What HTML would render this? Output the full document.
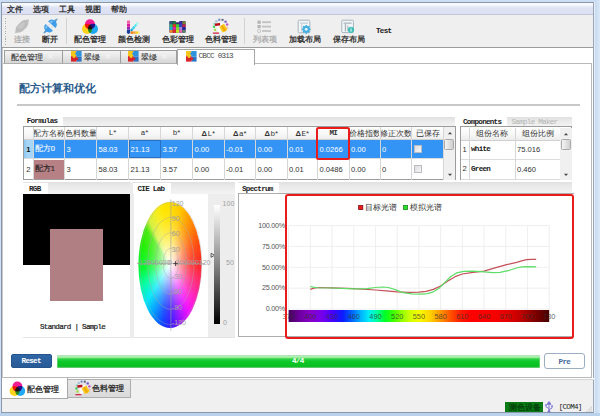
<!DOCTYPE html>
<html lang="zh">
<head>
<meta charset="utf-8">
<title>配方计算和优化</title>
<style>
html,body{margin:0;padding:0;}
body{width:600px;height:416px;overflow:hidden;background:#cfdff1;font-family:"Liberation Sans",sans-serif;}
#w{position:relative;width:600px;height:416px;overflow:hidden;background:#cfe0f4;}
#w div,#w span,#w svg{position:absolute;box-sizing:border-box;}
.c{font-family:"Liberation Sans",sans-serif;font-size:7.7px;line-height:9px;color:#1e1e22;white-space:nowrap;-webkit-text-stroke:0.25px currentColor;}
.m{font-family:"Liberation Mono",monospace;font-size:7.6px;line-height:9px;letter-spacing:-0.73px;color:#333;white-space:nowrap;}
.d{font-family:"Liberation Sans",sans-serif;font-size:7.6px;line-height:9px;color:#303030;white-space:nowrap;}
.g{color:#a8a8a8;}
.n{-webkit-text-stroke:0 transparent;color:#333;}
.w{color:#fff;}
.vl{width:1px;background:#dcdcdc;}
.hl{height:1px;background:#dcdcdc;}
</style>
</head>
<body>
<div id="w">

<!-- window frame -->
<div style="left:0;top:0;width:600px;height:3px;background:#cbdef3;"></div>
<div style="left:594.2px;top:2.2px;width:1.2px;height:411px;background:#e6edf6;"></div>
<div style="left:1px;top:2.2px;width:593.3px;height:411px;background:#fff;border:1px solid #8a96ab;border-left-width:1.2px;border-right:1.1px solid #9aa5b6;"></div>
<div style="left:595.2px;top:0;width:4.8px;height:416px;background:linear-gradient(90deg,#c6daf0,#dbe9f8);"></div>
<div style="left:0;top:0;width:1px;height:416px;background:#cfe0f4;"></div>
<div style="left:0;top:413.2px;width:600px;height:3px;background:#b9d1eb;"></div>
<div style="left:2.2px;top:48px;width:1px;height:352px;background:#c9c9c9;"></div>

<!-- menu bar -->
<div style="left:2.2px;top:3.2px;width:591px;height:11px;background:linear-gradient(180deg,#fcfdff 0%,#f2f4fb 22%,#dfe3f4 42%,#dbe0f2 100%);"></div>
<div style="left:2.2px;top:14px;width:591px;height:1px;background:#c4c7d6;"></div>
<span class="c" style="left:7px;top:4.5px;">文件</span>
<span class="c" style="left:33px;top:4.5px;">选项</span>
<span class="c" style="left:59px;top:4.5px;">工具</span>
<span class="c" style="left:85px;top:4.5px;">视图</span>
<span class="c" style="left:111px;top:4.5px;">帮助</span>

<!-- toolbar -->
<div style="left:2.2px;top:15px;width:591px;height:32px;background:#efefef;"></div>
<div style="left:2.2px;top:47px;width:591px;height:1px;background:#9c9c9c;"></div>
<div style="left:5px;top:18px;width:1px;height:27px;background:repeating-linear-gradient(180deg,#adadad 0,#adadad 1.1px,#efefef 1.1px,#efefef 2.56px);"></div>
<div style="left:66px;top:18px;width:1px;height:26px;background:#d2d2d2;"></div>
<div style="left:244px;top:18px;width:1px;height:26px;background:#d2d2d2;"></div>

<span class="c g" style="left:14px;top:35px;">连接</span>
<span class="c" style="left:42px;top:35px;">断开</span>
<span class="c" style="left:74px;top:35px;">配色管理</span>
<span class="c" style="left:118px;top:35px;">颜色检测</span>
<span class="c" style="left:161.5px;top:35px;">色彩管理</span>
<span class="c" style="left:205px;top:35px;">色料管理</span>
<span class="c g" style="left:252.5px;top:35px;">列表项</span>
<span class="c" style="left:288.5px;top:35px;">加载布局</span>
<span class="c" style="left:332.5px;top:35px;">保存布局</span>
<span class="m" style="left:376px;top:27px;font-weight:bold;color:#222;">Test</span>

<!-- TOOLBAR ICONS -->
<svg id="tbicons" style="left:0;top:15px;" width="400" height="33" viewBox="0 15 400 33">
<!-- connect (disabled) -->
<g transform="translate(22 26.3) rotate(-44)">
  <path d="M-10,0 C-7.5,-0.6 -6.5,-3.9 -2,-3.9 L2,-3.9 C6.5,-3.9 7.5,-0.6 10,0 C7.5,0.6 6.5,3.9 2,3.9 L-2,3.9 C-6.5,3.9 -7.5,0.6 -10,0 Z" fill="#bdbdbd"/>
  <ellipse cx="0" cy="-0.8" rx="4" ry="2" fill="#c8c8c8"/>
</g>
<!-- disconnect -->
<g transform="translate(50.5 26) rotate(-47)">
  <path d="M1.8,-5 A5,5 0 0 1 6.7,-1.1 L9.8,-0.5 L9.8,0.5 L6.7,1.1 A5,5 0 0 1 1.8,5 Z" fill="#3f9ce9"/>
  <path d="M-1.8,-5 A5,5 0 0 0 -6.7,-1.1 L-9.8,-0.5 L-9.8,0.5 L-6.7,1.1 A5,5 0 0 0 -1.8,5 Z" fill="#3f9ce9"/>
  <path d="M2.5,-3.8 A3.8,3.8 0 0 1 5.6,-1.4 L2.5,-1.4 Z" fill="#86c6f7"/>
  <path d="M-2.5,-3.8 A3.8,3.8 0 0 0 -5.6,-1.4 L-2.5,-1.4 Z" fill="#86c6f7"/>
  <rect x="-1.9" y="-2.3" width="3.8" height="0.9" fill="#d9dde2"/>
  <rect x="-1.9" y="1.4" width="3.8" height="0.9" fill="#d9dde2"/>
  <path d="M7.4,-0.7 L10.4,0 L7.4,0.7 Z M-7.4,-0.7 L-10.4,0 L-7.4,0.7 Z" fill="#8d9aa8"/>
</g>
<!-- color matching: three circles -->
<g style="isolation:isolate">
  <circle cx="90" cy="24.4" r="5.1" fill="#f21a93"/>
  <circle cx="87.1" cy="28.9" r="5.1" fill="#ffd21c" style="mix-blend-mode:multiply"/>
  <circle cx="92.9" cy="28.9" r="5.1" fill="#1fa9f2" style="mix-blend-mode:multiply"/>
</g>
<!-- colour detect: K fan -->
<g>
  <rect x="127" y="20.6" width="3" height="3" fill="#f55aa8"/>
  <rect x="127" y="23.8" width="3" height="3" fill="#e0189a"/>
  <rect x="127" y="27" width="3" height="2.8" fill="#8a2fb0"/>
  <path d="M127,30 h3 v2 h-3 Z" fill="#153f9a"/>
  <circle cx="128.5" cy="32.1" r="1.8" fill="#153f9a"/>
  <g transform="rotate(-50 130.6 31.4)">
    <rect x="131" y="30.2" width="2.6" height="2.3" fill="#1fa8dc"/>
    <rect x="134" y="30.2" width="2.6" height="2.3" fill="#2fd0ee"/>
    <rect x="137" y="30.2" width="2.6" height="2.3" fill="#55e6f2"/>
    <rect x="140" y="30.2" width="2.2" height="2.3" fill="#a4f2f2"/>
  </g>
  <rect x="130.6" y="31.4" width="2.4" height="2.4" fill="#f47a20"/>
  <rect x="133.2" y="31.4" width="2.4" height="2.4" fill="#f9a01c"/>
  <rect x="135.8" y="31.4" width="2.2" height="2.4" fill="#fdd01a"/>
  <rect x="138.2" y="31.4" width="1.6" height="2.4" fill="#fbe98a"/>
</g>
<!-- colour management: multicolour folder -->
<g id="cm"><path d="M169.4,22 q0,-1 1,-1 h4.6 l1,1.2 h3 l1,-1.2 h4.6 q1,0 1,1 v9.8 q0,1 -1,1 h-14.2 q-1,0 -1,-1 Z" fill="#35307a"/><rect x="169.6" y="21.3" width="3.1" height="2.8" fill="#2a5a78"/><rect x="172.8" y="21.3" width="3.1" height="2.8" fill="#1d7a3a"/><rect x="179.2" y="21.3" width="3.1" height="2.8" fill="#3a28a8"/><rect x="182.4" y="21.3" width="3.1" height="2.8" fill="#76862e"/><rect x="169.6" y="24.2" width="3.1" height="2.8" fill="#25c468"/><rect x="172.8" y="24.2" width="3.1" height="2.8" fill="#e2361f"/><rect x="176" y="24.2" width="3.1" height="2.8" fill="#35d436"/><rect x="179.2" y="24.2" width="3.1" height="2.8" fill="#3345c6"/><rect x="182.4" y="24.2" width="3.1" height="2.8" fill="#c22446"/><rect x="169.6" y="27.1" width="3.1" height="2.8" fill="#22b4c6"/><rect x="172.8" y="27.1" width="3.1" height="2.8" fill="#e4229e"/><rect x="176" y="27.1" width="3.1" height="2.8" fill="#86e226"/><rect x="179.2" y="27.1" width="3.1" height="2.8" fill="#b486e2"/><rect x="182.4" y="27.1" width="3.1" height="2.8" fill="#24249a"/><rect x="169.6" y="30" width="3.1" height="2.8" fill="#f2862a"/><rect x="172.8" y="30" width="3.1" height="2.8" fill="#e22626"/><rect x="176" y="30" width="3.1" height="2.8" fill="#c4e428"/><rect x="179.2" y="30" width="3.1" height="2.8" fill="#e464a4"/><rect x="182.4" y="30" width="3.1" height="2.8" fill="#64866a"/></g>
<!-- pigment management -->
<g id="pm"><g transform="translate(220.7 26.3) scale(1.0)"><circle cx="-1.39" cy="-6.55" r="1.2" fill="#6f86c8" fill-opacity="0.9"/><circle cx="1.85" cy="-6.44" r="1.2" fill="#56607e" fill-opacity="0.9"/><circle cx="4.82" cy="-4.65" r="1.2" fill="#7452c4" fill-opacity="1"/><circle cx="6.47" cy="-1.73" r="1.2" fill="#c052c4" fill-opacity="1"/><circle cx="6.50" cy="1.62" r="1.2" fill="#f09aa0" fill-opacity="0.55"/><circle cx="4.98" cy="4.48" r="1.2" fill="#f4c890" fill-opacity="0.4"/><circle cx="-4.31" cy="-5.13" r="1.2" fill="#7fb4d8" fill-opacity="0.7"/><circle cx="-6.21" cy="-2.51" r="1.2" fill="#58c8b0" fill-opacity="0.6"/><circle cx="-6.68" cy="0.47" r="1.2" fill="#3fd052" fill-opacity="1"/><circle cx="-5.68" cy="3.55" r="1.2" fill="#a4e23e" fill-opacity="1"/><circle cx="-3.35" cy="5.80" r="1.2" fill="#e8e87a" fill-opacity="0.5"/><path d="M-3.6,-1.2 L1.4,-3.2 L3,-0.6 L-0.2,5.6 L-3.2,6.2 Z" fill="#fcfcfc"/><g transform="translate(2.7 1.9) rotate(-32)"><rect x="-2.9" y="-3.5" width="5.8" height="7" rx="1.2" fill="#f8c91a"/><rect x="-0.9" y="-3.2" width="1.8" height="6.4" fill="#f2a40c"/></g><rect x="-5.6" y="-3.4" width="5.2" height="2.5" rx="0.4" fill="#bd0f1a" transform="rotate(-6)"/><rect x="-7.8" y="6.2" width="6.2" height="1.25" fill="#d21f46"/></g></g>
<!-- list item (disabled) -->
<g fill="#c2c2c2">
  <rect x="257.5" y="20.6" width="3.2" height="3.2" fill="#b4b4b4"/>
  <rect x="262" y="21.3" width="9" height="1.8"/>
  <rect x="257.5" y="25" width="3.2" height="3.2" fill="#b4b4b4"/>
  <rect x="262" y="25.7" width="9" height="1.8"/>
  <circle cx="259.1" cy="31" r="1.6" fill="none" stroke="#bcbcbc" stroke-width="0.8"/>
  <rect x="262" y="30.1" width="9" height="1.8"/>
</g>
<!-- load layout -->
<g>
  <rect x="298.2" y="20.2" width="11.6" height="12.6" rx="1" fill="#f3f6f8" stroke="#aab4bd" stroke-width="1"/>
  <rect x="300" y="22.4" width="8" height="1.5" fill="#cdd5db"/>
  <rect x="301.2" y="24" width="1.1" height="7.6" fill="#c3ccd3"/>
  <circle cx="306.2" cy="29.3" r="3.5" fill="#45b1e0"/>
  <circle cx="306.2" cy="29.3" r="1.5" fill="#e8f6fc"/>
  <g stroke="#45b1e0" stroke-width="1.5">
    <path d="M306.2,24.9 v8.8 M301.8,29.3 h8.8 M303.1,26.2 l6.2,6.2 M309.3,26.2 l-6.2,6.2"/>
  </g>
  <circle cx="306.2" cy="29.3" r="2.9" fill="#45b1e0"/>
  <circle cx="306.2" cy="29.3" r="1.4" fill="#eef8fd"/>
</g>
<!-- save layout -->
<g>
  <rect x="341.8" y="20.2" width="11.6" height="12.4" rx="1" fill="#f3f6f8" stroke="#aab4bd" stroke-width="1"/>
  <rect x="343.6" y="22.4" width="8" height="1.6" fill="#b9c3cb"/>
  <rect x="344.8" y="24" width="1.3" height="7.4" fill="#aab4bd"/>
  <rect x="347.2" y="25.4" width="1.2" height="6" fill="#b9c3cb"/>
  <circle cx="351" cy="29.8" r="3.1" fill="#3fbfb9"/>
  <rect x="350.5" y="28.9" width="1" height="2.8" fill="#e8fbfa"/>
  <rect x="350.5" y="27.6" width="1" height="0.9" fill="#e8fbfa"/>
</g>
</svg>

<!-- TABS -->

<!-- content panel -->
<div style="left:3px;top:63px;width:589px;height:315px;border:1px solid #b9b9b9;border-left:none;background:#fff;"></div>


<div id="tabs" style="left:0;top:48px;width:600px;height:17px;">
<div style="left:4px;top:2px;width:59px;height:14px;border:1px solid #9d9d9d;border-bottom-color:#b0b0b0;background:linear-gradient(180deg,#f4f4f4 0%,#e6e6e6 50%,#d6d6d6 100%);"></div>
<div style="left:62px;top:2px;width:59px;height:14px;border:1px solid #9d9d9d;border-bottom-color:#b0b0b0;background:linear-gradient(180deg,#f4f4f4 0%,#e6e6e6 50%,#d6d6d6 100%);"></div>
<div style="left:120px;top:2px;width:57px;height:14px;border:1px solid #9d9d9d;border-bottom-color:#b0b0b0;background:linear-gradient(180deg,#f4f4f4 0%,#e6e6e6 50%,#d6d6d6 100%);"></div>
<div style="left:177px;top:1px;width:78px;height:16px;border:1px solid #a6a6a6;border-bottom:none;background:#fff;"></div>
<span class="c" style="left:11px;top:4.5px;-webkit-text-stroke:0.1px #2a2a2a;color:#2a2a2a;">配色管理</span>
<span class="c" style="left:47.2px;top:3.8px;color:#f6f6f6;font-size:10.5px;-webkit-text-stroke:0 transparent;">×</span>
<svg style="left:71px;top:3px;" width="11" height="11" viewBox="0 0 11 11"><rect x="0" y="0" width="5.2" height="5.2" fill="#f6c61a"/><rect x="5.2" y="0" width="5.4" height="5.6" fill="#2f93dc"/><rect x="0" y="5.2" width="5.6" height="5.4" fill="#d8222b"/><rect x="5.6" y="5.6" width="5" height="5" fill="#2b73c4"/><circle cx="3" cy="5.6" r="1.5" fill="#f6c61a"/><circle cx="5.9" cy="7.8" r="1.4" fill="#d8222b"/><circle cx="5.4" cy="2.6" r="1.2" fill="#2f93dc"/></svg>
<span class="c" style="left:84px;top:4.5px;-webkit-text-stroke:0.1px #2a2a2a;color:#2a2a2a;">翠绿</span>
<span class="c" style="left:104.7px;top:3.8px;color:#f6f6f6;font-size:10.5px;-webkit-text-stroke:0 transparent;">×</span>
<svg style="left:128px;top:3px;" width="11" height="11" viewBox="0 0 11 11"><rect x="0" y="0" width="5.2" height="5.2" fill="#f6c61a"/><rect x="5.2" y="0" width="5.4" height="5.6" fill="#2f93dc"/><rect x="0" y="5.2" width="5.6" height="5.4" fill="#d8222b"/><rect x="5.6" y="5.6" width="5" height="5" fill="#2b73c4"/><circle cx="3" cy="5.6" r="1.5" fill="#f6c61a"/><circle cx="5.9" cy="7.8" r="1.4" fill="#d8222b"/><circle cx="5.4" cy="2.6" r="1.2" fill="#2f93dc"/></svg>
<span class="c" style="left:141px;top:4.5px;-webkit-text-stroke:0.1px #2a2a2a;color:#2a2a2a;">翠绿</span>
<span class="c" style="left:161.2px;top:3.8px;color:#f6f6f6;font-size:10.5px;-webkit-text-stroke:0 transparent;">×</span>
<svg style="left:185.5px;top:3px;" width="11" height="11" viewBox="0 0 11 11"><rect x="0" y="0" width="5.2" height="5.2" fill="#f6c61a"/><rect x="5.2" y="0" width="5.4" height="5.6" fill="#2f93dc"/><rect x="0" y="5.2" width="5.6" height="5.4" fill="#d8222b"/><rect x="5.6" y="5.6" width="5" height="5" fill="#2b73c4"/><circle cx="3" cy="5.6" r="1.5" fill="#f6c61a"/><circle cx="5.9" cy="7.8" r="1.4" fill="#d8222b"/><circle cx="5.4" cy="2.6" r="1.2" fill="#2f93dc"/></svg>
<span class="m" style="left:198.5px;top:4px;color:#4a4a4a;">CBCC 0313</span>
</div>

<!-- CONTENT -->
<div id="content" style="left:0;top:0;width:600px;height:378px;">
<span class="c" style="left:18.5px;top:82px;font-size:11.1px;line-height:13px;font-weight:bold;color:#2b5b8c;-webkit-text-stroke:0 transparent;">配方计算和优化</span>
<div style="left:16.5px;top:104px;width:563.5px;height:1.5px;background:#c8c8c8;"></div>
<div style="left:23px;top:116.5px;width:432px;height:10px;background:linear-gradient(180deg,#e0e0e0 0%,#e9e9e9 35%,#f4f4f4 100%);"></div>
<div style="left:23px;top:116.2px;width:40px;height:10.3px;background:#fff;"></div>
<span class="m" style="left:26.7px;top:117px;font-weight:bold;color:#222;">Formulas</span>
<div style="left:23px;top:125.7px;width:432.5px;height:54.8px;border:1px solid #9c9c9c;background:#fff;"></div>
<div style="left:24px;top:127px;width:419.5px;height:12.5px;background:linear-gradient(180deg,#ffffff 0%,#f7f7f7 55%,#ececec 100%);"></div>
<div style="left:32.6px;top:139.6px;width:410.9px;height:18.6px;background:#3494f6;"></div>
<div style="left:24px;top:139.6px;width:8.6px;height:18.6px;background:linear-gradient(90deg,#8cc6f0,#a8d6f7 40%);"></div>
<div style="left:33.4px;top:159.6px;width:30.8px;height:19.9px;background:#b68084;"></div>
<div class="hl" style="left:24px;top:139px;width:419.5px;background:#d0d0d0;"></div>
<div class="hl" style="left:24px;top:158.2px;width:419.5px;"></div>
<div class="vl" style="left:32.5px;top:127px;height:52.5px;background:#d6d6d6;"></div>
<div class="vl" style="left:64.0px;top:127px;height:52.5px;background:#d6d6d6;"></div>
<div class="vl" style="left:96.0px;top:127px;height:52.5px;background:#d6d6d6;"></div>
<div class="vl" style="left:128.0px;top:127px;height:52.5px;background:#d6d6d6;"></div>
<div class="vl" style="left:160.0px;top:127px;height:52.5px;background:#d6d6d6;"></div>
<div class="vl" style="left:192.0px;top:127px;height:52.5px;background:#d6d6d6;"></div>
<div class="vl" style="left:223.5px;top:127px;height:52.5px;background:#d6d6d6;"></div>
<div class="vl" style="left:255.0px;top:127px;height:52.5px;background:#d6d6d6;"></div>
<div class="vl" style="left:286.5px;top:127px;height:52.5px;background:#d6d6d6;"></div>
<div class="vl" style="left:317.0px;top:127px;height:52.5px;background:#d6d6d6;"></div>
<div class="vl" style="left:348.5px;top:127px;height:52.5px;background:#d6d6d6;"></div>
<div class="vl" style="left:379.5px;top:127px;height:52.5px;background:#d6d6d6;"></div>
<div class="vl" style="left:411.0px;top:127px;height:52.5px;background:#d6d6d6;"></div>
<div class="vl" style="left:443.0px;top:127px;height:52.5px;background:#d6d6d6;"></div>
<div style="left:128.5px;top:139.6px;width:32px;height:18.6px;border:1px solid #2a6fc0;"></div>
<div style="left:34px;top:128.5px;width:29.5px;height:10px;overflow:hidden;"><span class="c n" style="left:50%;top:0;transform:translateX(-50%);">配方名称</span></div>
<div style="left:65.5px;top:128.5px;width:30.0px;height:10px;overflow:hidden;"><span class="c n" style="left:50%;top:0;transform:translateX(-50%);">色料数量</span></div>
<span class="m" style="left:112.5px;top:128.5px;transform:translateX(-50%);">L*</span>
<span class="m" style="left:144.5px;top:128.5px;transform:translateX(-50%);">a*</span>
<span class="m" style="left:176.5px;top:128.5px;transform:translateX(-50%);">b*</span>
<span class="m" style="left:208.25px;top:128.5px;transform:translateX(-50%);"><span style="position:static;font-family:'Liberation Sans',sans-serif;letter-spacing:0.6px;font-weight:bold;">Δ</span>L*</span>
<span class="m" style="left:239.75px;top:128.5px;transform:translateX(-50%);"><span style="position:static;font-family:'Liberation Sans',sans-serif;letter-spacing:0.6px;font-weight:bold;">Δ</span>a*</span>
<span class="m" style="left:271.25px;top:128.5px;transform:translateX(-50%);"><span style="position:static;font-family:'Liberation Sans',sans-serif;letter-spacing:0.6px;font-weight:bold;">Δ</span>b*</span>
<span class="m" style="left:302.25px;top:128.5px;transform:translateX(-50%);"><span style="position:static;font-family:'Liberation Sans',sans-serif;letter-spacing:0.6px;font-weight:bold;">Δ</span>E*</span>
<span class="m" style="left:333.25px;top:128.5px;transform:translateX(-50%);font-weight:bold;">MI</span>
<div style="left:350px;top:128.5px;width:29px;height:10px;overflow:hidden;"><span class="c n" style="left:50%;top:0;transform:translateX(-50%);">价格指数</span></div>
<div style="left:381px;top:128.5px;width:29.5px;height:10px;overflow:hidden;"><span class="c n" style="left:50%;top:0;transform:translateX(-50%);">修正次数</span></div>
<div style="left:412.5px;top:128.5px;width:30.0px;height:10px;overflow:hidden;"><span class="c n" style="left:50%;top:0;transform:translateX(-50%);">已保存</span></div>
<span class="d" style="left:26.2px;top:144.5px;font-weight:bold;color:#111;">1</span>
<span class="d" style="left:26.2px;top:164.5px;">2</span>
<span class="c w" style="left:34.8px;top:144.3px;-webkit-text-stroke:0.1px #fff;">配方<span class="d w" style="position:static;">0</span></span>
<span class="d w" style="left:66.5px;top:144.5px;">3</span>
<span class="d w" style="left:98.5px;top:144.5px;">58.03</span>
<span class="d w" style="left:130.5px;top:144.5px;">21.13</span>
<span class="d w" style="left:162.5px;top:144.5px;">3.57</span>
<span class="d w" style="left:194.5px;top:144.5px;">0.00</span>
<span class="d w" style="left:226px;top:144.5px;">-0.01</span>
<span class="d w" style="left:257.5px;top:144.5px;">0.00</span>
<span class="d w" style="left:289px;top:144.5px;">0.01</span>
<span class="d w" style="left:319.5px;top:144.5px;">0.0266</span>
<span class="d w" style="left:351px;top:144.5px;">0.00</span>
<span class="d w" style="left:382px;top:144.5px;">0</span>
<span class="c" style="left:34.8px;top:164.3px;-webkit-text-stroke:0.15px #222;">配方<span class="d" style="position:static;">1</span></span>
<span class="d" style="left:66.5px;top:164.5px;">3</span>
<span class="d" style="left:98.5px;top:164.5px;">58.03</span>
<span class="d" style="left:130.5px;top:164.5px;">21.13</span>
<span class="d" style="left:162.5px;top:164.5px;">3.57</span>
<span class="d" style="left:194.5px;top:164.5px;">0.00</span>
<span class="d" style="left:226px;top:164.5px;">-0.01</span>
<span class="d" style="left:257.5px;top:164.5px;">0.00</span>
<span class="d" style="left:289px;top:164.5px;">0.01</span>
<span class="d" style="left:319.5px;top:164.5px;">0.0486</span>
<span class="d" style="left:351px;top:164.5px;">0.00</span>
<span class="d" style="left:382px;top:164.5px;">0</span>
<div style="left:413.7px;top:145px;width:8.2px;height:8.2px;border:1px solid #b9bcc2;background:linear-gradient(135deg,#dcdcdc,#f6f6f6);"></div>
<div style="left:413.7px;top:165px;width:8.2px;height:8.2px;border:1px solid #b9bcc2;background:linear-gradient(135deg,#dcdcdc,#f6f6f6);"></div>
<div style="left:443.5px;top:127px;width:11.5px;height:52.5px;background:#f0f0f0;"></div><div style="left:444.3px;top:138.5px;width:10px;height:11px;border:1px solid #a9a9a9;border-radius:1.5px;background:linear-gradient(90deg,#f4f4f4,#e2e2e2 50%,#cecece);"></div><svg style="left:446.5px;top:131px;" width="6" height="4" viewBox="0 0 6 4"><path d="M0.9,3.2 L3,0.9 L5.1,3.2Z" fill="#4a4a4a"/></svg><svg style="left:446.5px;top:172.5px;" width="6" height="4" viewBox="0 0 6 4"><path d="M0.9,0.8 L3,3.1 L5.1,0.8Z" fill="#4a4a4a"/></svg>
<div style="left:315.5px;top:127px;width:34px;height:32.5px;border:2px solid #ea1b1b;border-radius:2.5px;"></div>
<div style="left:459.5px;top:116.5px;width:112px;height:10.5px;background:linear-gradient(180deg,#e0e0e0 0%,#e9e9e9 35%,#f4f4f4 100%);"></div>
<div style="left:459.5px;top:116.2px;width:47.5px;height:10.8px;background:#fff;"></div>
<span class="m" style="left:463px;top:118px;color:#222;font-weight:bold;">Components</span>
<span class="m" style="left:511.5px;top:118px;color:#b4b4b4;">Sample Maker</span>
<div style="left:459.5px;top:126.3px;width:112.5px;height:54.2px;border:1px solid #9c9c9c;background:#fff;"></div>
<div style="left:460.5px;top:127.5px;width:99.5px;height:12px;background:linear-gradient(180deg,#ffffff 0%,#f7f7f7 55%,#ececec 100%);"></div>
<div class="hl" style="left:460.5px;top:139.5px;width:99.5px;background:#d0d0d0;"></div>
<div class="hl" style="left:460.5px;top:158.5px;width:99.5px;"></div>
<div class="hl" style="left:460.5px;top:178.5px;width:99.5px;"></div>
<div class="vl" style="left:468.5px;top:127.5px;height:52px;background:#d6d6d6;"></div>
<div class="vl" style="left:514.5px;top:127.5px;height:52px;background:#d6d6d6;"></div>
<div class="vl" style="left:559.5px;top:127.5px;height:52px;background:#d6d6d6;"></div>
<span class="c n" style="left:492px;top:128.5px;transform:translateX(-50%);">组份名称</span>
<span class="c n" style="left:537.5px;top:128.5px;transform:translateX(-50%);">组份比例</span>
<span class="d" style="left:462.5px;top:144.5px;">1</span>
<span class="d" style="left:462.5px;top:164px;">2</span>
<span class="m" style="left:471px;top:145px;font-weight:bold;color:#222;">white</span>
<span class="m" style="left:471px;top:165px;font-weight:bold;color:#222;">Green</span>
<span class="d" style="left:517px;top:144.5px;">75.016</span>
<span class="d" style="left:517px;top:164.7px;">0.460</span>
<div style="left:560px;top:127.5px;width:11.5px;height:52px;background:#f0f0f0;"></div><div style="left:560.8px;top:139.0px;width:10px;height:11px;border:1px solid #a9a9a9;border-radius:1.5px;background:linear-gradient(90deg,#f4f4f4,#e2e2e2 50%,#cecece);"></div><svg style="left:563px;top:131.5px;" width="6" height="4" viewBox="0 0 6 4"><path d="M0.9,3.2 L3,0.9 L5.1,3.2Z" fill="#4a4a4a"/></svg><svg style="left:563px;top:172.5px;" width="6" height="4" viewBox="0 0 6 4"><path d="M0.9,0.8 L3,3.1 L5.1,0.8Z" fill="#4a4a4a"/></svg>
<div style="left:23px;top:182.2px;width:107.5px;height:11.5px;background:linear-gradient(180deg,#e0e0e0 0%,#e9e9e9 35%,#f4f4f4 100%);"></div>
<div style="left:23px;top:183px;width:25px;height:11px;background:#fff;"></div>
<span class="m" style="left:29px;top:184.8px;font-weight:bold;color:#222;">RGB</span>
<div style="left:23px;top:193.5px;width:107.5px;height:144.5px;border-bottom:1px solid #e4e4e4;background:#fff;"></div>
<div style="left:130.3px;top:182.2px;width:3px;height:155.8px;background:#ececec;"></div>
<div style="left:23px;top:194px;width:107px;height:71px;background:#000;"></div>
<div style="left:49.5px;top:229.2px;width:53.5px;height:71.8px;background:#b07f83;"></div>
<span class="m" style="left:40px;top:322.7px;color:#1c1c1c;-webkit-text-stroke:0.2px #1c1c1c;">Standard | Sample</span>
<div style="left:133.3px;top:182.2px;width:102px;height:11.5px;background:linear-gradient(180deg,#e0e0e0 0%,#e9e9e9 35%,#f4f4f4 100%);"></div>
<div style="left:133.3px;top:183px;width:37.5px;height:11px;background:#fff;"></div>
<span class="m" style="left:137.5px;top:184.8px;font-weight:bold;color:#222;">CIE Lab</span>
<div style="left:133.3px;top:193.5px;width:102px;height:144.5px;border-bottom:1px solid #e4e4e4;border-left:1px solid #ececec;background:#fff;"></div>
<div style="left:207.8px;top:193.8px;width:27px;height:143px;background:#ededed;"></div>
<div style="left:107.4px;top:201.5px;width:126.0px;height:126.0px;border-radius:50%;transform:scaleX(0.5016);overflow:hidden;background:conic-gradient(from 0deg,#ffe000 0deg,#ffc800 20deg,#ff8c00 45deg,#ff4a10 70deg,#ff2a2a 90deg,#ff2a7a 108deg,#ff20d0 128deg,#f010ff 142deg,#9a10ff 160deg,#3818ff 178deg,#1048ff 195deg,#00a0ff 215deg,#00e8f8 232deg,#00ffa0 250deg,#00f830 266deg,#20f000 290deg,#48ea10 307deg,#d4f040 317deg,#f4ee20 332deg,#ffe600 346deg,#ffe000 360deg);"><div style="left:0;top:0;width:126.0px;height:126.0px;background:radial-gradient(circle closest-side,rgba(255,255,255,1) 0%,rgba(255,255,255,0.9) 8%,rgba(255,255,255,0.62) 28%,rgba(255,255,255,0.30) 50%,rgba(255,255,255,0.09) 72%,rgba(255,255,255,0) 92%);"></div></div>
<svg style="left:133.5px;top:194px;" width="102" height="143" viewBox="133.5 194 102 143"><ellipse cx="170.4" cy="263.4" rx="7.72" ry="15.35" fill="none" stroke="#a8a8a8" stroke-opacity="0.6" stroke-width="0.7"/><ellipse cx="170.4" cy="263.4" rx="15.44" ry="30.70" fill="none" stroke="#a8a8a8" stroke-opacity="0.6" stroke-width="0.7"/><ellipse cx="170.4" cy="263.4" rx="23.16" ry="46.05" fill="none" stroke="#a8a8a8" stroke-opacity="0.6" stroke-width="0.7"/><ellipse cx="170.4" cy="263.4" rx="30.88" ry="61.40" fill="none" stroke="#a8a8a8" stroke-opacity="0.5" stroke-width="0.7"/><path d="M170.4,199.5 V330.5 M136.5,263.4 H204.5" stroke="#9d9d9d" stroke-opacity="0.8" stroke-width="0.8" fill="none"/><path d="M172.9,263.6 h4.4 M175.1,261.2 v4.8" stroke="#333" stroke-width="0.9" fill="none"/><path d="M210.6,253.3 L214,255.3 L210.6,257.3 Z" fill="#f4f4f4" stroke="#333" stroke-width="0.8"/></svg>
<span style="left:171.8px;top:198.5px;font-family:'Liberation Sans',sans-serif;font-size:7px;line-height:9px;color:#a0a0a0;white-space:nowrap;">120</span>
<span style="left:171.8px;top:213.8px;font-family:'Liberation Sans',sans-serif;font-size:7px;line-height:9px;color:#a0a0a0;white-space:nowrap;">90</span>
<span style="left:171.8px;top:229.2px;font-family:'Liberation Sans',sans-serif;font-size:7px;line-height:9px;color:#a0a0a0;white-space:nowrap;">60</span>
<span style="left:171.8px;top:244.5px;font-family:'Liberation Sans',sans-serif;font-size:7px;line-height:9px;color:#a0a0a0;white-space:nowrap;">30</span>
<span style="left:171.8px;top:271.9px;font-family:'Liberation Sans',sans-serif;font-size:7px;line-height:9px;color:#a0a0a0;white-space:nowrap;">-30</span>
<span style="left:171.8px;top:287.3px;font-family:'Liberation Sans',sans-serif;font-size:7px;line-height:9px;color:#a0a0a0;white-space:nowrap;">-60</span>
<span style="left:171.8px;top:302.6px;font-family:'Liberation Sans',sans-serif;font-size:7px;line-height:9px;color:#a0a0a0;white-space:nowrap;">-90</span>
<span style="left:171.8px;top:318.0px;font-family:'Liberation Sans',sans-serif;font-size:7px;line-height:9px;color:#a0a0a0;white-space:nowrap;">-120</span>
<span style="left:137.0px;top:258.3px;font-family:'Liberation Sans',sans-serif;font-size:7px;line-height:9px;color:#a0a0a0;white-space:nowrap;">-120</span>
<span style="left:144.7px;top:258.3px;font-family:'Liberation Sans',sans-serif;font-size:7px;line-height:9px;color:#a0a0a0;white-space:nowrap;">-90</span>
<span style="left:152.5px;top:258.3px;font-family:'Liberation Sans',sans-serif;font-size:7px;line-height:9px;color:#a0a0a0;white-space:nowrap;">-60</span>
<span style="left:160.2px;top:258.3px;font-family:'Liberation Sans',sans-serif;font-size:7px;line-height:9px;color:#a0a0a0;white-space:nowrap;">-30</span>
<span style="left:167.9px;top:258.3px;font-family:'Liberation Sans',sans-serif;font-size:7px;line-height:9px;color:#a0a0a0;white-space:nowrap;">0</span>
<span style="left:175.6px;top:258.3px;font-family:'Liberation Sans',sans-serif;font-size:7px;line-height:9px;color:#a0a0a0;white-space:nowrap;">30</span>
<span style="left:183.3px;top:258.3px;font-family:'Liberation Sans',sans-serif;font-size:7px;line-height:9px;color:#a0a0a0;white-space:nowrap;">60</span>
<span style="left:191.1px;top:258.3px;font-family:'Liberation Sans',sans-serif;font-size:7px;line-height:9px;color:#a0a0a0;white-space:nowrap;">90</span>
<span style="left:198.8px;top:258.3px;font-family:'Liberation Sans',sans-serif;font-size:7px;line-height:9px;color:#a0a0a0;white-space:nowrap;">120</span>
<div style="left:214.3px;top:204.6px;width:6.2px;height:119.4px;background:linear-gradient(180deg,#ffffff 0%,#d0d0d0 20%,#808080 52%,#303030 82%,#000 100%);"></div>
<span style="left:222.6px;top:198.5px;font-family:'Liberation Sans',sans-serif;font-size:7px;line-height:9px;color:#a0a0a0;white-space:nowrap;">100</span>
<span style="left:226px;top:257.8px;font-family:'Liberation Sans',sans-serif;font-size:7px;line-height:9px;color:#a0a0a0;white-space:nowrap;">50</span>
<span style="left:223px;top:317.5px;font-family:'Liberation Sans',sans-serif;font-size:7px;line-height:9px;color:#a0a0a0;white-space:nowrap;">0</span>
<div style="left:238.3px;top:182.2px;width:333.5px;height:11.5px;background:linear-gradient(180deg,#e0e0e0 0%,#e9e9e9 35%,#f4f4f4 100%);"></div>
<div style="left:238.3px;top:183px;width:40.7px;height:11px;background:#fff;"></div>
<span class="m" style="left:242px;top:184.8px;font-weight:bold;color:#222;">Spectrum</span>
<div style="left:238px;top:193px;width:336px;height:144px;border:1px solid #adadad;border-right:none;background:#fff;"></div>
<svg style="left:239px;top:194px;" width="334" height="143" viewBox="239 194 334 143"><defs><linearGradient id="sp" x1="0" x2="1" y1="0" y2="0"><stop offset="0.0000" stop-color="#46005a"/><stop offset="0.0417" stop-color="#6c00a0"/><stop offset="0.0833" stop-color="#8600c8"/><stop offset="0.1250" stop-color="#7800ea"/><stop offset="0.1667" stop-color="#4a00ff"/><stop offset="0.2083" stop-color="#0a1cff"/><stop offset="0.2444" stop-color="#0068ff"/><stop offset="0.2778" stop-color="#00b4ff"/><stop offset="0.3083" stop-color="#00eef4"/><stop offset="0.3389" stop-color="#00ffa0"/><stop offset="0.3694" stop-color="#00ff28"/><stop offset="0.4000" stop-color="#38ff00"/><stop offset="0.4333" stop-color="#90ff00"/><stop offset="0.4667" stop-color="#d0ff00"/><stop offset="0.5000" stop-color="#f6fb00"/><stop offset="0.5417" stop-color="#ffd400"/><stop offset="0.5833" stop-color="#ff9400"/><stop offset="0.6222" stop-color="#ff5000"/><stop offset="0.6611" stop-color="#ff1a00"/><stop offset="0.7000" stop-color="#ff0000"/><stop offset="0.7917" stop-color="#f80000"/><stop offset="0.8556" stop-color="#dc0000"/><stop offset="0.9056" stop-color="#b00000"/><stop offset="0.9500" stop-color="#7a0000"/><stop offset="1.0000" stop-color="#460000"/></linearGradient></defs><path d="M288.60,225.6 V310.0" stroke="#e9e9e9" stroke-width="0.75"/><path d="M310.32,225.6 V310.0" stroke="#e9e9e9" stroke-width="0.75"/><path d="M332.03,225.6 V310.0" stroke="#e9e9e9" stroke-width="0.75"/><path d="M353.75,225.6 V310.0" stroke="#e9e9e9" stroke-width="0.75"/><path d="M375.47,225.6 V310.0" stroke="#e9e9e9" stroke-width="0.75"/><path d="M397.18,225.6 V310.0" stroke="#e9e9e9" stroke-width="0.75"/><path d="M418.90,225.6 V310.0" stroke="#e9e9e9" stroke-width="0.75"/><path d="M440.62,225.6 V310.0" stroke="#e9e9e9" stroke-width="0.75"/><path d="M462.33,225.6 V310.0" stroke="#e9e9e9" stroke-width="0.75"/><path d="M484.05,225.6 V310.0" stroke="#e9e9e9" stroke-width="0.75"/><path d="M505.77,225.6 V310.0" stroke="#e9e9e9" stroke-width="0.75"/><path d="M527.48,225.6 V310.0" stroke="#e9e9e9" stroke-width="0.75"/><path d="M549.20,225.6 V310.0" stroke="#e9e9e9" stroke-width="0.75"/><path d="M288.6,309.00 H549.2" stroke="#e9e9e9" stroke-width="0.75"/><path d="M288.6,288.15 H549.2" stroke="#e9e9e9" stroke-width="0.75"/><path d="M288.6,267.30 H549.2" stroke="#e9e9e9" stroke-width="0.75"/><path d="M288.6,246.45 H549.2" stroke="#e9e9e9" stroke-width="0.75"/><path d="M288.6,225.60 H549.2" stroke="#e9e9e9" stroke-width="0.75"/><rect x="288.6" y="310" width="260.60" height="12" fill="url(#sp)"/><path d="M310.32,289.40 L313.94,288.15 L319.00,287.48 L332.03,287.82 L353.75,288.65 L375.47,289.98 L386.33,290.82 L397.18,291.82 L408.04,292.40 L418.90,292.15 L426.14,291.32 L433.38,289.40 L440.62,286.06 L447.86,281.06 L455.09,276.64 L462.33,273.97 L473.19,272.30 L484.05,271.14 L494.91,267.88 L505.77,264.80 L516.62,262.30 L522.42,260.63 L526.76,259.71 L531.10,259.46 L536.17,259.46" fill="none" stroke="#c4505a" stroke-width="1.2" stroke-linejoin="round"/><path d="M310.32,286.48 L313.21,287.15 L317.56,287.73 L332.03,287.98 L353.75,288.82 L366.78,288.57 L375.47,287.48 L382.71,286.98 L388.50,287.48 L395.74,289.82 L402.97,292.65 L411.66,293.82 L420.35,294.15 L427.59,293.65 L433.38,291.82 L439.17,288.15 L444.96,282.31 L450.75,276.47 L456.54,272.89 L463.78,271.30 L473.19,271.14 L484.05,271.80 L492.74,272.64 L499.98,272.39 L509.39,270.30 L516.62,267.97 L521.69,266.88 L527.48,266.63 L536.17,266.88" fill="none" stroke="#5cdd66" stroke-width="1.2" stroke-linejoin="round"/><rect x="358.6" y="205.4" width="4.2" height="4.2" fill="#f01a1a" stroke="#7c1218" stroke-width="0.8"/><rect x="403.4" y="205.4" width="4.2" height="4.2" fill="#2be02b" stroke="#1f8a24" stroke-width="0.8"/></svg>
<span class="c n" style="left:365.4px;top:202.6px;">目标光谱</span>
<span class="c n" style="left:409.6px;top:202.6px;">模拟光谱</span>
<span class="d" style="left:284.8px;top:220.9px;transform:translateX(-100%);color:#555;font-size:7.2px;letter-spacing:-0.25px;">100.00%</span>
<span class="d" style="left:284.8px;top:241.8px;transform:translateX(-100%);color:#555;font-size:7.2px;letter-spacing:-0.25px;">75.00%</span>
<span class="d" style="left:284.8px;top:262.6px;transform:translateX(-100%);color:#555;font-size:7.2px;letter-spacing:-0.25px;">50.00%</span>
<span class="d" style="left:284.8px;top:283.4px;transform:translateX(-100%);color:#555;font-size:7.2px;letter-spacing:-0.25px;">25.00%</span>
<span class="d" style="left:284.8px;top:304.3px;transform:translateX(-100%);color:#555;font-size:7.2px;letter-spacing:-0.25px;">0.00%</span>
<span style="left:288.6px;top:311.5px;transform:translateX(-50%);font-family:'Liberation Sans',sans-serif;font-size:7.4px;line-height:9px;color:rgba(50,50,50,0.78);white-space:nowrap;">370</span>
<span style="left:310.3px;top:311.5px;transform:translateX(-50%);font-family:'Liberation Sans',sans-serif;font-size:7.4px;line-height:9px;color:rgba(50,50,50,0.78);white-space:nowrap;">400</span>
<span style="left:332.0px;top:311.5px;transform:translateX(-50%);font-family:'Liberation Sans',sans-serif;font-size:7.4px;line-height:9px;color:rgba(50,50,50,0.78);white-space:nowrap;">430</span>
<span style="left:353.8px;top:311.5px;transform:translateX(-50%);font-family:'Liberation Sans',sans-serif;font-size:7.4px;line-height:9px;color:rgba(50,50,50,0.78);white-space:nowrap;">460</span>
<span style="left:375.5px;top:311.5px;transform:translateX(-50%);font-family:'Liberation Sans',sans-serif;font-size:7.4px;line-height:9px;color:rgba(50,50,50,0.78);white-space:nowrap;">490</span>
<span style="left:397.2px;top:311.5px;transform:translateX(-50%);font-family:'Liberation Sans',sans-serif;font-size:7.4px;line-height:9px;color:rgba(50,50,50,0.78);white-space:nowrap;">520</span>
<span style="left:418.9px;top:311.5px;transform:translateX(-50%);font-family:'Liberation Sans',sans-serif;font-size:7.4px;line-height:9px;color:rgba(50,50,50,0.78);white-space:nowrap;">550</span>
<span style="left:440.6px;top:311.5px;transform:translateX(-50%);font-family:'Liberation Sans',sans-serif;font-size:7.4px;line-height:9px;color:rgba(50,50,50,0.78);white-space:nowrap;">580</span>
<span style="left:462.3px;top:311.5px;transform:translateX(-50%);font-family:'Liberation Sans',sans-serif;font-size:7.4px;line-height:9px;color:rgba(50,50,50,0.78);white-space:nowrap;">610</span>
<span style="left:484.1px;top:311.5px;transform:translateX(-50%);font-family:'Liberation Sans',sans-serif;font-size:7.4px;line-height:9px;color:rgba(50,50,50,0.78);white-space:nowrap;">640</span>
<span style="left:505.8px;top:311.5px;transform:translateX(-50%);font-family:'Liberation Sans',sans-serif;font-size:7.4px;line-height:9px;color:rgba(50,50,50,0.78);white-space:nowrap;">670</span>
<span style="left:527.5px;top:311.5px;transform:translateX(-50%);font-family:'Liberation Sans',sans-serif;font-size:7.4px;line-height:9px;color:rgba(50,50,50,0.78);white-space:nowrap;">700</span>
<span style="left:549.2px;top:311.5px;transform:translateX(-50%);font-family:'Liberation Sans',sans-serif;font-size:7.4px;line-height:9px;color:rgba(50,50,50,0.78);white-space:nowrap;">730</span>
<div style="left:284.5px;top:194px;width:289px;height:144.5px;border:2px solid #ea1b1b;border-radius:3px;"></div>
<div style="left:11px;top:354.2px;width:40.5px;height:14.1px;border-radius:2px;background:linear-gradient(180deg,#2f66a6,#285a96);border:1px solid #24548e;"></div>
<span class="m w" style="left:31.2px;top:357.3px;transform:translateX(-50%);font-weight:bold;">Reset</span>
<div style="left:56.5px;top:355.2px;width:483px;height:12.6px;border-radius:1.5px;background:linear-gradient(180deg,#c8f2c8 0%,#a6eea6 18%,#2fd445 30%,#0dc828 50%,#0abf22 85%,#22b838 100%);box-shadow:inset 0 0 0 0.5px #9fd8a4;"></div>
<span class="m w" style="left:292px;top:357.3px;font-weight:bold;">4/4</span>
<div style="left:544px;top:353.4px;width:40.8px;height:15.8px;border-radius:3px;background:#fff;border:1.3px solid #9cadc4;"></div>
<span class="m" style="left:564.3px;top:357.8px;transform:translateX(-50%);font-weight:bold;color:#3f6b99;">Pre</span>
</div>

<!-- BOTTOM -->
<div id="bottom" style="left:2.2px;top:378px;width:591px;height:34.2px;background:#f0f0f0;">
<div style="left:0;top:0;width:591.7px;height:1px;background:#fff;"></div><div style="left:0;top:0.8px;width:591.7px;height:1px;background:#d6d6d6;"></div>
<div style="left:0;top:0;width:66px;height:21.3px;background:#fff;border:1px solid #a8a8a8;border-top:none;border-left:none;"></div>
<div style="left:66px;top:1.2px;width:63px;height:19px;background:linear-gradient(180deg,#e6e6e6,#dadada);border:1px solid #adadad;border-left:none;"></div>
<svg style="left:6.6px;top:2.8px;" width="17" height="16" viewBox="0 0 17 16"><g style="isolation:isolate"><circle cx="8.4" cy="5.6" r="5" fill="#f21a93"/><circle cx="5.6" cy="10" r="5" fill="#ffd21c" style="mix-blend-mode:multiply"/><circle cx="11.2" cy="10" r="5" fill="#1fa9f2" style="mix-blend-mode:multiply"/></g></svg>
<span class="c" style="left:24.5px;top:6.5px;">配色管理</span>
<svg id="pm2" style="left:71.4px;top:1.1px;" width="18" height="18" viewBox="0 0 18 18"><g transform="translate(9 9) scale(0.98)"><circle cx="-1.39" cy="-6.55" r="1.2" fill="#6f86c8" fill-opacity="0.9"/><circle cx="1.85" cy="-6.44" r="1.2" fill="#56607e" fill-opacity="0.9"/><circle cx="4.82" cy="-4.65" r="1.2" fill="#7452c4" fill-opacity="1"/><circle cx="6.47" cy="-1.73" r="1.2" fill="#c052c4" fill-opacity="1"/><circle cx="6.50" cy="1.62" r="1.2" fill="#f09aa0" fill-opacity="0.55"/><circle cx="4.98" cy="4.48" r="1.2" fill="#f4c890" fill-opacity="0.4"/><circle cx="-4.31" cy="-5.13" r="1.2" fill="#7fb4d8" fill-opacity="0.7"/><circle cx="-6.21" cy="-2.51" r="1.2" fill="#58c8b0" fill-opacity="0.6"/><circle cx="-6.68" cy="0.47" r="1.2" fill="#3fd052" fill-opacity="1"/><circle cx="-5.68" cy="3.55" r="1.2" fill="#a4e23e" fill-opacity="1"/><circle cx="-3.35" cy="5.80" r="1.2" fill="#e8e87a" fill-opacity="0.5"/><path d="M-3.6,-1.2 L1.4,-3.2 L3,-0.6 L-0.2,5.6 L-3.2,6.2 Z" fill="#fcfcfc"/><g transform="translate(2.7 1.9) rotate(-32)"><rect x="-2.9" y="-3.5" width="5.8" height="7" rx="1.2" fill="#f8c91a"/><rect x="-0.9" y="-3.2" width="1.8" height="6.4" fill="#f2a40c"/></g><rect x="-5.6" y="-3.4" width="5.2" height="2.5" rx="0.4" fill="#bd0f1a" transform="rotate(-6)"/><rect x="-7.8" y="6.2" width="6.2" height="1.25" fill="#d21f46"/></g></svg>
<span class="c" style="left:90.3px;top:6px;">色料管理</span>
<div style="left:503.3px;top:24px;width:37.8px;height:10px;background:#0a7a14;"></div>
<span class="c" style="left:506.5px;top:24.5px;color:#033c0a;">测色设备</span>
<svg style="left:542px;top:22.5px;" width="10" height="12" viewBox="0 0 10 12"><path d="M5,0.6 L7,3.2 H3Z M5,3 V10 M5,7.6 L2,5.8 V4.2 M5,8.8 L8,7 V5.4" stroke="#7c76d2" stroke-width="1" fill="none"/><path d="M5,0.4 L7.1,3.2 H2.9Z" fill="#7c76d2"/><circle cx="5" cy="10.3" r="1.3" fill="#7c76d2"/><circle cx="2" cy="3.9" r="0.9" fill="#7c76d2"/><rect x="7.2" y="4.2" width="1.6" height="1.6" fill="#7c76d2"/></svg>
<span class="m" style="left:556.5px;top:24.5px;color:#222;">[COM4]</span>
<svg style="left:584px;top:28px;" width="7" height="7" viewBox="0 0 7 7"><g fill="#c2c2c2"><rect x="4.6" y="0.6" width="1.2" height="1.2"/><rect x="2.6" y="2.6" width="1.2" height="1.2"/><rect x="4.6" y="2.6" width="1.2" height="1.2"/><rect x="0.6" y="4.6" width="1.2" height="1.2"/><rect x="2.6" y="4.6" width="1.2" height="1.2"/><rect x="4.6" y="4.6" width="1.2" height="1.2"/></g></svg>
</div>

</div>
</body>
</html>
